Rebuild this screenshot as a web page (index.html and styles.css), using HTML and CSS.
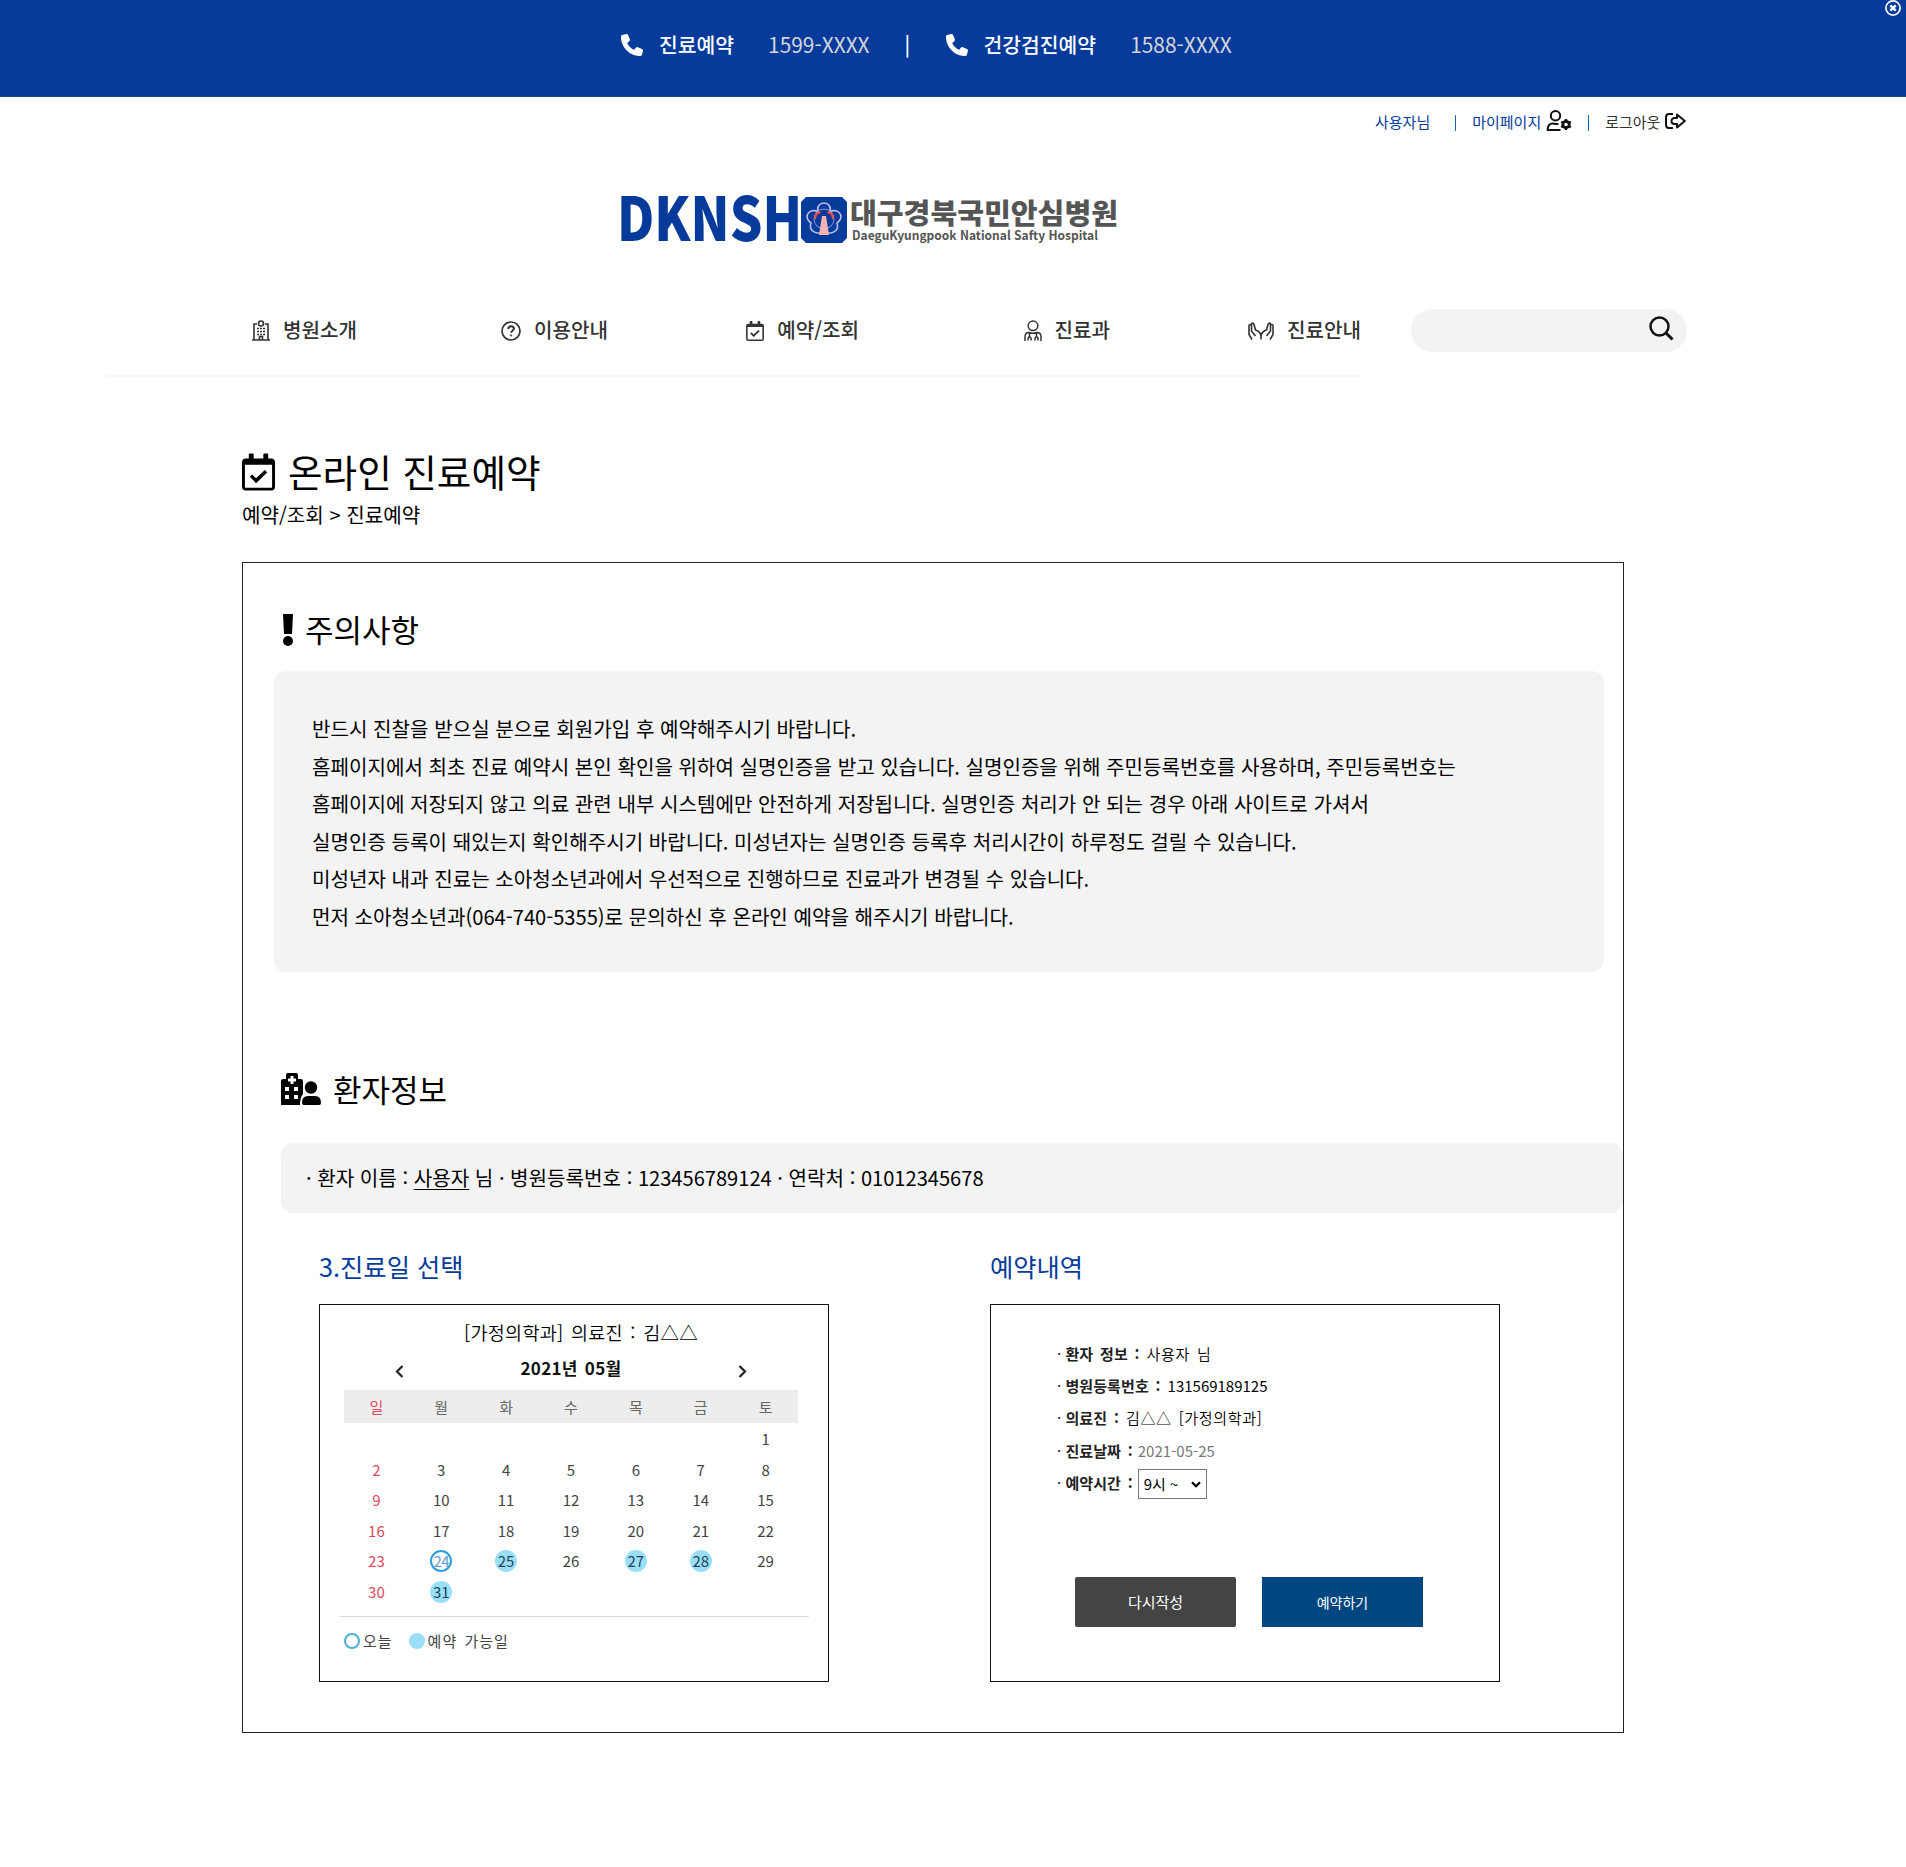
FILE: index.html
```html
<!DOCTYPE html>
<html lang="ko">
<head>
<meta charset="utf-8">
<title>온라인 진료예약</title>
<link rel="stylesheet" href="styles.css">
</head>
<body>
<svg class="defs" width="0" height="0" aria-hidden="true">
  <symbol id="phone" viewBox="0 0 512 512"><path fill="currentColor" d="M164.900 24.600c-7.700-18.600-28-28.500-47.400-23.200l-88 24C12.100 30.200 0 46 0 64C0 311.400 200.600 512 448 512c18 0 33.800-12.100 38.600-29.500l24-88c5.300-19.400-4.600-39.700-23.200-47.400l-96-40c-16.300-6.800-35.200-2.100-46.300 11.600L304.700 368C234.300 334.700 177.300 277.700 144 207.300L193.300 167c13.700-11.200 18.400-30 11.600-46.300l-40-96z"/></symbol>
  <symbol id="calendar" viewBox="0 0 34 38"><path fill="currentColor" fill-rule="evenodd" d="M7 1a1 1 0 0 1 1-1h3a1 1 0 0 1 1 1v4h10V1a1 1 0 0 1 1-1h3a1 1 0 0 1 1 1v4h3a4 4 0 0 1 4 4v25a4 4 0 0 1-4 4H4a4 4 0 0 1-4-4V9a4 4 0 0 1 4-4h3zM3 11.500v23c0 .5.300.8.800.8h26.400c.5 0 .8-.3.800-.8v-23z"/><path fill="currentColor" d="M8 24l2.500-2.500 4 4 9-8.500 2.500 2.500-11.500 11z"/></symbol>
</svg>

<header class="topbar">
  <svg class="phone"><use href="#phone"/></svg>
  <span class="call-name">진료예약</span><span class="call-number">1599-XXXX</span>
  <span class="call-divider">|</span>
  <svg class="phone"><use href="#phone"/></svg>
  <span class="call-name">건강검진예약</span><span class="call-number">1588-XXXX</span>
  <svg class="close" viewBox="0 0 16 16" fill="none" stroke="#fff"><circle cx="8" cy="8" r="7.100" stroke-width="1.700"/><path d="M5.300 5.300l5.400 5.400M10.700 5.300l-5.400 5.400" stroke-width="2.400"/></svg>
</header>

<div class="user-menu">
  <span class="user-name">사용자님</span><i class="bar"></i>
  <span class="my-page">마이페이지</span>
  <svg class="user-icon" viewBox="0 0 25 21" fill="none" stroke="#111" stroke-width="2"><circle cx="9" cy="5.800" r="4.700"/><path d="M14 20H1.200c0-4 1.800-6.500 5-6.500 1.500 0 3 1 5.800.2"/><circle cx="19.500" cy="14.500" r="3.200" stroke-width="2.800"/><path d="M19.500 9v2M19.500 18v2M14.700 11.700l1.800 1M22.500 16.300l1.800 1M24.300 11.700l-1.800 1M16.500 16.300l-1.800 1" stroke-width="2.400"/></svg>
  <i class="bar second"></i>
  <span class="logout">로그아웃</span>
  <svg class="exit-icon" viewBox="0 0 21 16" fill="none" stroke="#111" stroke-width="2" stroke-linejoin="round"><path d="M8 1H4a3 3 0 0 0-3 3v8a3 3 0 0 0 3 3h4"/><path d="M12 1.500L19.800 8 12 14.500V11H9.500a3 3 0 0 1-3-3 3 3 0 0 1 3-3H12z"/></svg>
</div>

<div class="logo">
  <svg width="500" height="56" viewBox="0 0 500 56">
    <text class="logo-mark" x="-4" y="51" textLength="185" lengthAdjust="spacingAndGlyphs">DKNSH</text>
    <path d="M185 7h36l5 5v36l-5 5h-36l-5-5V12z" fill="#063b9b"/>
    <path d="M197 22c-3-12 15-12 12 0 8-5 16 5 7 11 3 9-8 13-13 7-5 6-16 2-13-7-9-6-1-16 7-11z" fill="none" stroke="#b9bfe2" stroke-width="1.600"/>
    <circle cx="203" cy="29" r="10" fill="none" stroke="#8f98d0" stroke-width="1"/>
    <path d="M201 26h4l3 19h-10z" fill="#f3b3b3"/><path d="M193.500 29l2-5 4-2M212.500 29l-2-5-4-2" fill="none" stroke="#ec4a4a" stroke-width="2.200"/>
    <text class="logo-name" x="229" y="34" textLength="268" lengthAdjust="spacingAndGlyphs">대구경북국민안심병원</text>
    <text class="logo-sub" x="231" y="49.500" textLength="246" lengthAdjust="spacingAndGlyphs">DaeguKyungpook National Safty Hospital</text>
  </svg>
</div>

<div class="nav-row">
  <nav class="nav">
    <a><svg width="18" height="21" viewBox="0 0 18 21" fill="none" stroke="#333" stroke-width="1.600"><path d="M0 20h18M2 20V4h3M13 4h3v16M7.500 20v-3.500h3V20"/><circle cx="9" cy="3.500" r="2.500"/><path d="M5 8.500h2M8 8.500h2M11 8.500h2M5 11.500h2M8 11.500h2M11 11.500h2M5 14.500h2M8 14.500h2M11 14.500h2"/></svg>병원소개</a>
    <a><svg width="20" height="20" viewBox="0 0 20 20" fill="none" stroke="#333"><circle cx="10" cy="10" r="9" stroke-width="1.700"/><path d="M7.300 8c0-3.600 5.600-3.500 5.600-.4 0 2.200-2.800 2-2.800 4.200" stroke-width="2"/><circle cx="10" cy="14.400" r=".7"/></svg>이용안내</a>
    <a><svg class="nav-cal" width="18" height="20"><use href="#calendar"/></svg>예약/조회</a>
    <a><svg width="18" height="21" viewBox="0 0 18 21" fill="none" stroke="#333" stroke-width="1.500"><circle cx="9" cy="5.800" r="4.800"/><path d="M1 21v-4c0-3 2-4.500 4-4.500 2.500 1 5.500 1 8 0 2 0 4 1.500 4 4.500v4M5.500 13v4M12.500 13v3.500M4 20.500v-2c0-2 3-2 3 0v2M11 20.500v-2c0-2 3-2 3 0v2"/></svg>진료과</a>
    <a><svg width="26" height="18" viewBox="0 0 26 18" fill="none" stroke="#333" stroke-width="1.600"><path d="M4 17.500l-3-5V4c0-2 2.500-2 2.500 0v5l4 5M3.500 5V2.500c0-1.800 2-1.800 2.500 0L7.500 8c2.500.5 5.500 3 5.500 6v3.500M22 17.500l3-5V4c0-2-2.500-2-2.500 0v5l-4 5M22.500 5V2.500c0-1.800-2-1.800-2.500 0L18.500 8c-2.500.5-5.500 3-5.500 6"/></svg>진료안내</a>
  </nav>
  <div class="search"><svg width="25" height="25" viewBox="0 0 25 25" fill="none" stroke="#111" stroke-width="2.500"><circle cx="10.500" cy="10.500" r="9"/><path d="M17 17l6.500 6.500" stroke-width="3"/></svg></div>
</div>

<main>
  <h1><svg width="33" height="38"><use href="#calendar"/></svg>온라인 진료예약</h1>
  <p class="crumb">예약/조회 &gt; 진료예약</p>

  <section class="frame">
    <h2 class="warn"><svg width="12" height="32" viewBox="0 0 12 32"><path d="M1 0h10l-1 20H2z"/><circle cx="6" cy="27" r="5"/></svg>주의사항</h2>
    <div class="notice">
      반드시 진찰을 받으실 분으로 회원가입 후 예약해주시기 바랍니다.<br>
      홈페이지에서 최초 진료 예약시 본인 확인을 위하여 실명인증을 받고 있습니다. 실명인증을 위해 주민등록번호를 사용하며, 주민등록번호는<br>
      홈페이지에 저장되지 않고 의료 관련 내부 시스템에만 안전하게 저장됩니다. 실명인증 처리가 안 되는 경우 아래 사이트로 가셔서<br>
      실명인증 등록이 돼있는지 확인해주시기 바랍니다. 미성년자는 실명인증 등록후 처리시간이 하루정도 걸릴 수 있습니다.<br>
      미성년자 내과 진료는 소아청소년과에서 우선적으로 진행하므로 진료과가 변경될 수 있습니다.<br>
      먼저 소아청소년과(064-740-5355)로 문의하신 후 온라인 예약을 해주시기 바랍니다.
    </div>

    <h2 class="patient-title"><svg width="40" height="32" viewBox="0 0 40 32"><path fill-rule="evenodd" d="M0 8q0-2 2-2h3V2q0-2 2-2h8q2 0 2 2v4h3q2 0 2 2v13q-3 3-3 11H0zM9.500 3v2.500H7v3h2.500V11h3V8.500H15v-3h-2.500V3zM4 14v4h4v-4zM13 14v4h4v-4zM4 22v4h4v-4zM13 22v4h4v-4z"/><circle cx="30" cy="14.500" r="6.200"/><path d="M21 30q0-7 6-7h7q6 0 6 7 0 2-2 2H23q-2 0-2-2z"/></svg>환자정보</h2>
    <div class="patient">· 환자 이름 : <u>사용자</u> 님 · 병원등록번호 : 123456789124 · 연락처 : 01012345678</div>

    <div class="columns">
      <section>
        <h3>3.진료일 선택</h3>
        <div class="card calendar">
          <p class="doctor">[가정의학과] 의료진 : 김△△</p>
          <div class="month">
            <svg width="9" height="13" viewBox="0 0 9 13"><path d="M7.500 1L2 6.500 7.500 12"/></svg>
            <b>2021년 05월</b>
            <svg width="9" height="13" viewBox="0 0 9 13"><path d="M1.500 1L7 6.500 1.500 12"/></svg>
          </div>
          <div class="week head"><span>일</span><span>월</span><span>화</span><span>수</span><span>목</span><span>금</span><span>토</span></div>
          <div class="week"><span></span><span></span><span></span><span></span><span></span><span></span><span>1</span></div>
          <div class="week"><span>2</span><span>3</span><span>4</span><span>5</span><span>6</span><span>7</span><span>8</span></div>
          <div class="week"><span>9</span><span>10</span><span>11</span><span>12</span><span>13</span><span>14</span><span>15</span></div>
          <div class="week"><span>16</span><span>17</span><span>18</span><span>19</span><span>20</span><span>21</span><span>22</span></div>
          <div class="week"><span>23</span><span class="today"><em>24</em></span><span class="open"><em>25</em></span><span>26</span><span class="open"><em>27</em></span><span class="open"><em>28</em></span><span>29</span></div>
          <div class="week"><span>30</span><span class="open"><em>31</em></span><span></span><span></span><span></span><span></span><span></span></div>
          <div class="legend"><i class="ring"></i><span class="legend-today">오늘</span><i class="dot"></i><span>예약 가능일</span></div>
        </div>
      </section>
      <section>
        <h3>예약내역</h3>
        <div class="card booking">
          <dl>
            <div><dt>· <b>환자 정보 :</b></dt><dd class="far">사용자 님</dd></div>
            <div><dt>· <b>병원등록번호 :</b></dt><dd class="number">131569189125</dd></div>
            <div><dt>· <b>의료진 :</b></dt><dd class="far">김△△ [가정의학과]</dd></div>
            <div><dt>· <b>진료날짜 :</b></dt><dd class="date">2021-05-25</dd></div>
            <div><dt>· <b>예약시간 :</b></dt><dd class="select">9시 ~<svg width="10" height="7" viewBox="0 0 10 7"><path d="M1 1.200l4 4 4-4"/></svg></dd></div>
          </dl>
          <div class="buttons"><button class="reset">다시작성</button><button class="submit">예약하기</button></div>
        </div>
      </section>
    </div>
  </section>
</main>
</body>
</html>
```
FILE: styles.css
```css
* { box-sizing: border-box; }
body {
  margin: 0;
  min-height: 1867px;
  background: #fff;
  color: #000;
  font: 20.100px/38px "Noto Sans CJK KR", sans-serif;
}
h1, h2, h3, p, dl, dd { margin: 0; font-weight: 400; }
svg { display: block; flex: none; }
.defs { position: absolute; }

.topbar {
  position: relative;
  display: flex;
  align-items: center;
  height: 97px;
  padding: 0 0 8px 621px;
  background: #063b9b;
  border-bottom: 1px solid #1f4288;
  color: #fff;
}
.phone { width: 22px; height: 22px; margin: 2px 16px 0 0; }
.call-name { font-size: 20.400px; font-weight: 500; margin-right: 34px; }
.call-number { font-size: 20.900px; color: #d4d6da; }
.call-divider { width: 6px; margin: 0 35px 0 35px; font-weight: 500; }
.close { position: absolute; top: 0; right: 5px; width: 16px; height: 16px; }

.user-menu {
  display: flex;
  align-items: center;
  height: 50px;
  padding-left: 1375px;
  font-size: 15px;
  color: #063b9b;
}
.bar { width: 1px; height: 16px; margin: 2px 16px 0 25px; background: #1a66b0; }
.bar.second { margin: 2px 16px 0 16px; background: #1a66b0; }
.user-icon { width: 26px; height: 21px; margin: 0 0 3px 5px; }
.logout { color: #333; }
.exit-icon { width: 21px; height: 16px; margin: 0 0 3px 5px; }

.logo { padding: 43px 0 0 621px; height: 99px; }
.logo svg { overflow: visible; }
.logo-mark { font-size: 60px; font-weight: 900; fill: #063b9b; }
.logo-name { font-size: 28.500px; font-weight: 900; fill: #555; }
.logo-sub { font-size: 12.500px; font-weight: 700; fill: #555; }

.nav-row { display: flex; padding: 63px 0 0 107px; height: 131px; }
.nav {
  display: grid;
  grid-template-columns: repeat(5, 251px);
  width: 1254px;
  padding-right: 1px;
  border-bottom: 2px solid #f6f6f6;
  color: #333;
}
.nav a { display: flex; align-items: center; justify-content: flex-end; height: 42px; padding-right: 1px; font-weight: 500; }
.nav a svg { margin: 1px 13px 0 0; }
.search {
  display: flex;
  align-items: center;
  justify-content: flex-end;
  width: 276px;
  height: 43px;
  margin-left: 50px;
  padding: 0 13px 4px 0;
  border-radius: 22px;
  background: #f3f3f3;
}

main { padding: 64px 0 0 242px; }
h1 { display: flex; align-items: center; font-size: 37.600px; line-height: 60px; }
h1 svg { margin: 2px 13px 0 0; }
.crumb { line-height: 30px; margin-top: -1px; }
.frame {
  width: 1382px;
  height: 1171px;
  margin-top: 32px;
  border: 1.500px solid #222;
}
h2 { display: flex; align-items: center; font-size: 31px; line-height: 50px; }
.warn { padding: 41px 0 0 39px; }
.warn svg { margin: 1px 11px 0 0; }
.notice {
  width: 1330px;
  height: 301px;
  margin: 17px 0 0 31px;
  padding: 39px 38px;
  border-radius: 12px;
  background: #f3f3f3;
  line-height: 37.600px;
  white-space: nowrap;
}
.patient-title { padding: 92px 0 0 38px; }
.patient-title svg { margin-right: 12px; }
.patient {
  height: 70px;
  margin: 29px 0 0 38px;
  padding-left: 25px;
  border-radius: 12px;
  background: #f3f3f3;
  line-height: 70px;
}
u { text-decoration-thickness: 1px; text-underline-offset: 3px; }
.columns { display: grid; grid-template-columns: 671px 511px; padding: 33px 0 0 76px; }
h3 { font-size: 25.300px; line-height: 40px; color: #063b9b; }
.card { width: 510px; height: 378px; margin-top: 18px; border: 1.500px solid #111; }

.calendar { padding: 10px 19px 0 24px; font-size: 15px; color: #444; }
.doctor { padding-left: 120px; font-size: 18.500px; font-weight: 350; line-height: 34px; letter-spacing: .3px; word-spacing: 2px; color: #000; }
.month { display: flex; align-items: center; height: 41px; padding: 4px 62px 0 51px; justify-content: space-between; color: #111; }
.month b { font-size: 17px; letter-spacing: .3px; word-spacing: 2px; padding-bottom: 8px; }
.month svg { fill: none; stroke: #222; stroke-width: 2.200; }
.week { display: grid; grid-template-columns: repeat(7, 1fr); width: 454px; height: 30.500px; line-height: 30px; text-align: center; }
.week span:first-child { color: #dd4a5c; }
.week span { display: flex; justify-content: center; align-items: center; }
.head { height: 33px; margin-bottom: 1px; background: #ededed; color: #666; }
.week em { width: 22px; height: 22px; border-radius: 50%; font-style: normal; line-height: 21px; }
.open em { background: #9adff8; color: #245; }
.today em { border: 2px solid #2a9fd8; line-height: 17px; color: #6a9cc8; letter-spacing: -.5px; }
.legend { display: flex; align-items: center; height: 48px; margin: 9px 0 0 -5px; padding-left: 5px; border-top: 1px solid #ddd; letter-spacing: 1px; word-spacing: 2px; }
.ring, .dot { width: 16px; height: 16px; border-radius: 50%; }
.ring { border: 2px solid #4aaedb; margin-right: 3px; }
.dot { background: #9adff8; margin: 0 3px 0 16px; }

.booking { padding: 33px 0 0 66px; font-size: 15px; }
dl > div { display: flex; align-items: center; height: 32.200px; }
dt { color: #222; }
dt b { letter-spacing: .1px; word-spacing: 2.500px; }
dd { margin-left: 5px; }
.far { margin-left: 7px; font-weight: 350; letter-spacing: .7px; word-spacing: 2px; }
.number { margin-left: 7px; }
.date { color: #777; }
.select {
  display: flex;
  align-items: center;
  justify-content: space-between;
  width: 69px;
  height: 30px;
  margin-top: 3px;
  padding: 0 5px;
  border: 1px solid #777;
}
.select svg { fill: none; stroke: #000; stroke-width: 2.200; }
.buttons { display: flex; gap: 26px; padding: 78px 0 0 18px; }
button { width: 161px; height: 50px; padding: 0; border: 0; font: 14px "Noto Sans CJK KR", sans-serif; color: #fff; }
.reset { background: #444; border-radius: 2px; font-size: 15px; }
.submit { background: #004680; }
```
